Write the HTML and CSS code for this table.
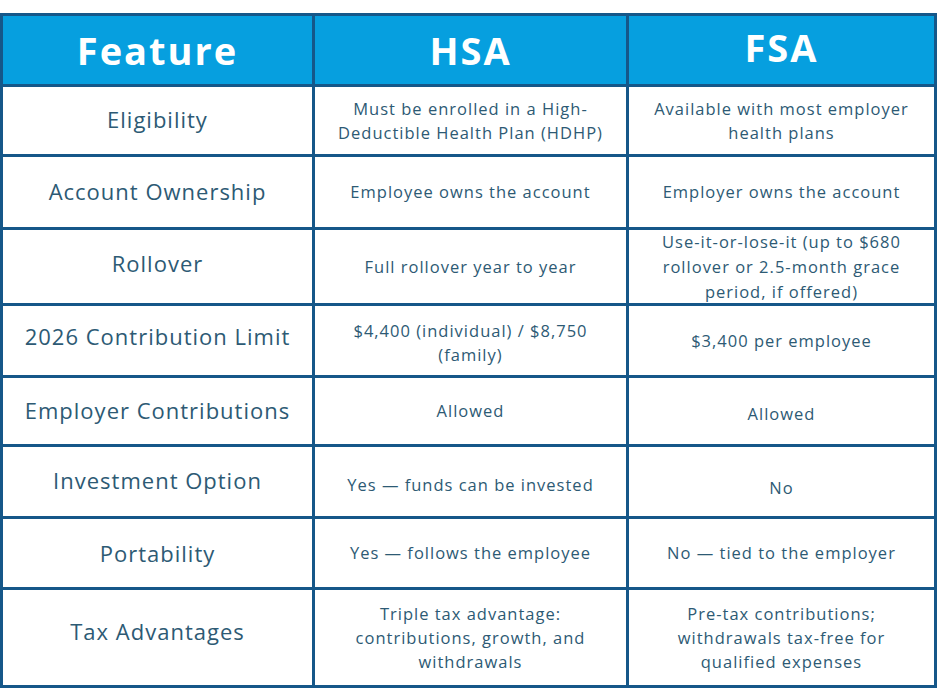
FILE: index.html
```html
<!DOCTYPE html>
<html>
<head>
<meta charset="utf-8">
<link rel="stylesheet" href="styles.css">
</head>
<body>
<div class="table">
  <div class="cell head">Feature</div>
  <div class="cell head">HSA</div>
  <div class="cell head up">FSA</div>

  <div class="cell feat">Eligibility</div>
  <div class="cell">Must be enrolled in a High-<br>Deductible Health Plan (HDHP)</div>
  <div class="cell">Available with most employer<br>health plans</div>

  <div class="cell feat">Account Ownership</div>
  <div class="cell">Employee owns the account</div>
  <div class="cell">Employer owns the account</div>

  <div class="cell feat lift8">Rollover</div>
  <div class="cell">Full rollover year to year</div>
  <div class="cell tall">Use-it-or-lose-it (up to $680<br>rollover or 2.5-month grace<br>period, if offered)</div>

  <div class="cell feat lift10">2026 Contribution Limit</div>
  <div class="cell down4">$4,400 (individual) / $8,750<br>(family)</div>
  <div class="cell">$3,400 per employee</div>

  <div class="cell feat">Employer Contributions</div>
  <div class="cell">Allowed</div>
  <div class="cell down">Allowed</div>

  <div class="cell feat">Investment Option</div>
  <div class="cell down">Yes — funds can be invested</div>
  <div class="cell down2">No</div>

  <div class="cell feat lift0">Portability</div>
  <div class="cell">Yes — follows the employee</div>
  <div class="cell">No — tied to the employer</div>

  <div class="cell feat lift14">Tax Advantages</div>
  <div class="cell">Triple tax advantage:<br>contributions, growth, and<br>withdrawals</div>
  <div class="cell">Pre-tax contributions;<br>withdrawals tax-free for<br>qualified expenses</div>
</div>
</body>
</html>
```

FILE: styles.css
```css
html, body {
  margin: 0;
  padding: 0;
  background: #ffffff;
}
body {
  padding-top: 13px;
  font-family: "Open Sans", "DejaVu Sans", sans-serif;
  color: #2d5a74;
}
.table {
  width: 937px;
  box-sizing: border-box;
  display: grid;
  grid-template-columns: 309px 311px 305px;
  grid-template-rows: 68px 67px 70px 73px 69px 66px 69px 68px 95px;
  gap: 3px;
  padding: 3px;
  background: #155789;
}
.cell {
  background: #ffffff;
  display: flex;
  align-items: center;
  justify-content: center;
  text-align: center;
  font-size: 16.5px;
  line-height: 24px;
  letter-spacing: 1px;
}
.cell.tall {
  line-height: 25px;
}
.head {
  background: #069fdf;
  color: #ffffff;
  font-weight: 700;
  font-size: 38px;
  letter-spacing: 2px;
}
.head.up {
  padding-bottom: 7px;
}
.feat {
  font-size: 22px;
  letter-spacing: 1px;
  padding-bottom: 3px;
}
.feat.lift0 {
  padding-bottom: 0;
}
.feat.lift8 {
  padding-bottom: 8px;
}
.feat.lift10 {
  padding-bottom: 10px;
}
.feat.lift14 {
  padding-bottom: 14px;
}
.down {
  padding-top: 6px;
}
.down2 {
  padding-top: 12px;
}
.down4 {
  padding-top: 4px;
}
```
